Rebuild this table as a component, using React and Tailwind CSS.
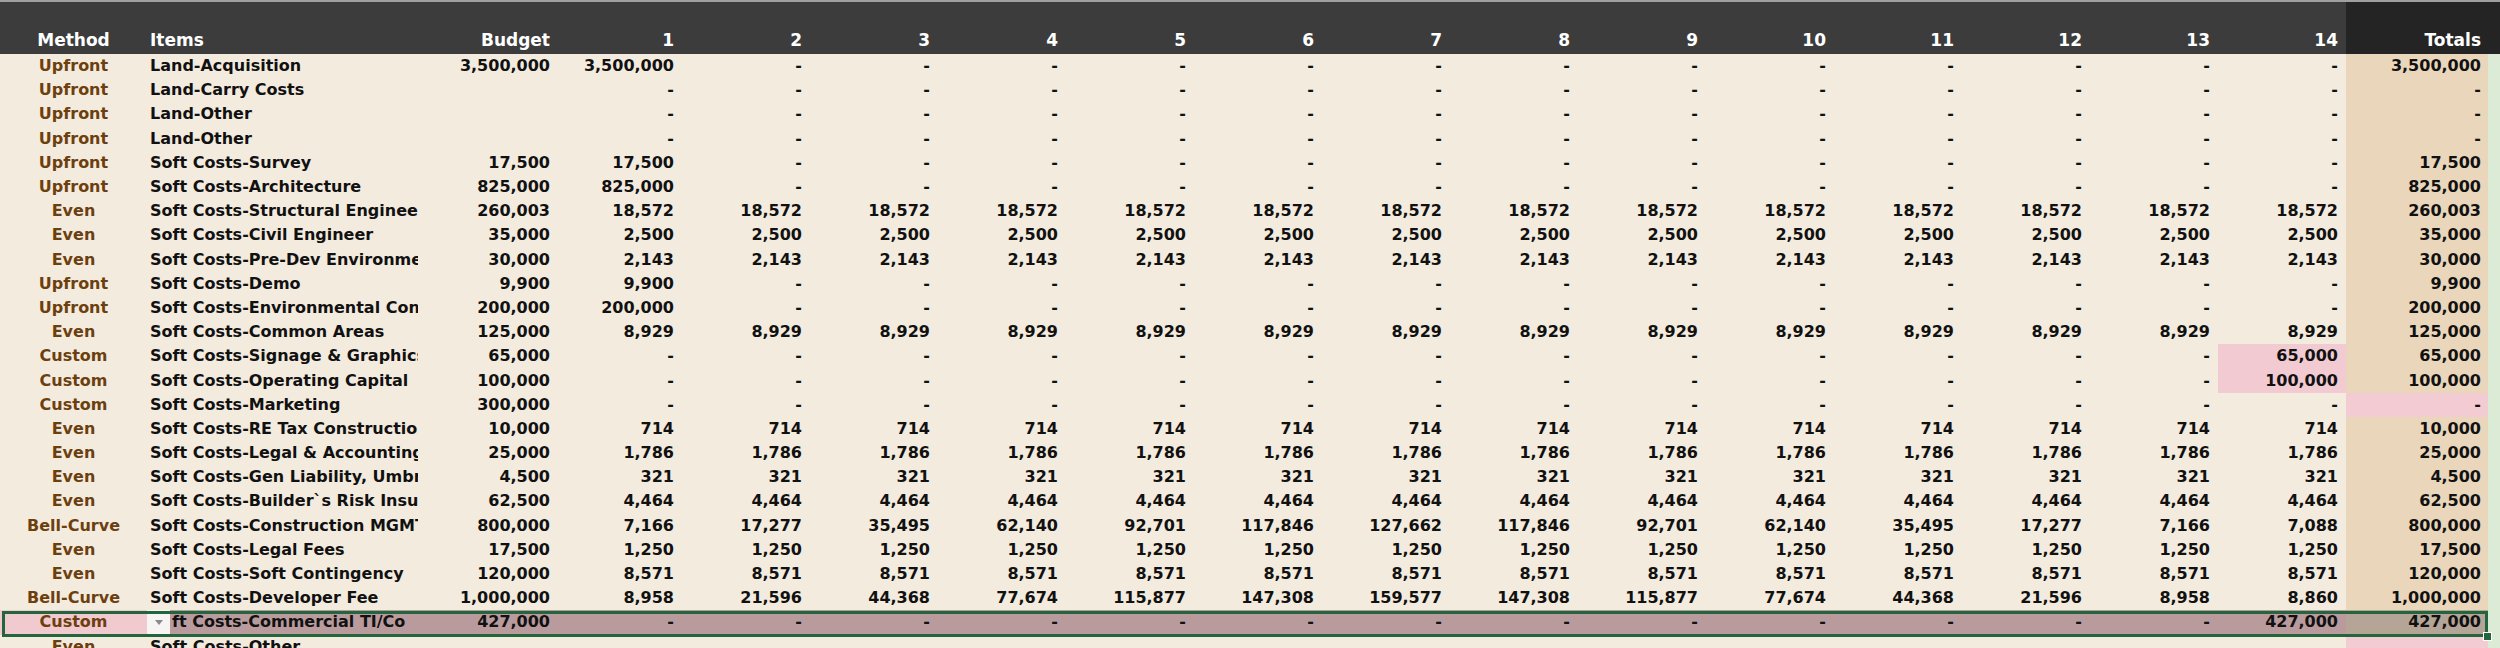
import React from 'react';

const even = (v) => Array(14).fill(v);
const dash = () => Array(14).fill('-');
const upfront = (v) => [v, ...Array(13).fill('-')];
const custom = (v) => [...Array(13).fill('-'), v];

const rows = [
  { method: 'Upfront', item: 'Land-Acquisition', budget: '3,500,000', months: upfront('3,500,000'), total: '3,500,000' },
  { method: 'Upfront', item: 'Land-Carry Costs', budget: '', months: dash(), total: '-' },
  { method: 'Upfront', item: 'Land-Other', budget: '', months: dash(), total: '-' },
  { method: 'Upfront', item: 'Land-Other', budget: '', months: dash(), total: '-' },
  { method: 'Upfront', item: 'Soft Costs-Survey', budget: '17,500', months: upfront('17,500'), total: '17,500' },
  { method: 'Upfront', item: 'Soft Costs-Architecture', budget: '825,000', months: upfront('825,000'), total: '825,000' },
  { method: 'Even', item: 'Soft Costs-Structural Engineer', budget: '260,003', months: even('18,572'), total: '260,003' },
  { method: 'Even', item: 'Soft Costs-Civil Engineer', budget: '35,000', months: even('2,500'), total: '35,000' },
  { method: 'Even', item: 'Soft Costs-Pre-Dev Environmental', budget: '30,000', months: even('2,143'), total: '30,000' },
  { method: 'Upfront', item: 'Soft Costs-Demo', budget: '9,900', months: upfront('9,900'), total: '9,900' },
  { method: 'Upfront', item: 'Soft Costs-Environmental Consultant', budget: '200,000', months: upfront('200,000'), total: '200,000' },
  { method: 'Even', item: 'Soft Costs-Common Areas', budget: '125,000', months: even('8,929'), total: '125,000' },
  { method: 'Custom', item: 'Soft Costs-Signage & Graphics', budget: '65,000', months: custom('65,000'), total: '65,000', pinkLast: true },
  { method: 'Custom', item: 'Soft Costs-Operating Capital', budget: '100,000', months: custom('100,000'), total: '100,000', pinkLast: true },
  { method: 'Custom', item: 'Soft Costs-Marketing', budget: '300,000', months: dash(), total: '-', pinkTotal: true },
  { method: 'Even', item: 'Soft Costs-RE Tax Construction', budget: '10,000', months: even('714'), total: '10,000' },
  { method: 'Even', item: 'Soft Costs-Legal & Accounting', budget: '25,000', months: even('1,786'), total: '25,000' },
  { method: 'Even', item: 'Soft Costs-Gen Liability, Umbrella', budget: '4,500', months: even('321'), total: '4,500' },
  { method: 'Even', item: 'Soft Costs-Builder`s Risk Insurance', budget: '62,500', months: even('4,464'), total: '62,500' },
  {
    method: 'Bell-Curve', item: 'Soft Costs-Construction MGMT', budget: '800,000',
    months: ['7,166', '17,277', '35,495', '62,140', '92,701', '117,846', '127,662', '117,846', '92,701', '62,140', '35,495', '17,277', '7,166', '7,088'],
    total: '800,000',
  },
  { method: 'Even', item: 'Soft Costs-Legal Fees', budget: '17,500', months: even('1,250'), total: '17,500' },
  { method: 'Even', item: 'Soft Costs-Soft Contingency', budget: '120,000', months: even('8,571'), total: '120,000' },
  {
    method: 'Bell-Curve', item: 'Soft Costs-Developer Fee', budget: '1,000,000',
    months: ['8,958', '21,596', '44,368', '77,674', '115,877', '147,308', '159,577', '147,308', '115,877', '77,674', '44,368', '21,596', '8,958', '8,860'],
    total: '1,000,000',
  },
];

const monthWidth = (i) => (i === 0 ? 'w-[124px]' : 'w-[128px]');

function Row({ r }) {
  return (
    <div className="flex h-[24.2px] items-center">
      <div className="w-[147px] shrink-0 text-center text-[#6c400e]">{r.method}</div>
      <div className="w-[271px] shrink-0 overflow-hidden whitespace-nowrap pl-[3px]">{r.item}</div>
      <div className="w-[140px] shrink-0 pr-2 text-right">{r.budget}</div>
      {r.months.map((m, i) => (
        <div
          key={i}
          className={`${monthWidth(i)} flex h-full shrink-0 items-center justify-end pr-2 ${
            r.pinkLast && i === 13 ? 'bg-[#f2cbd2]' : ''
          }`}
        >
          {m}
        </div>
      ))}
      <div
        className={`flex h-full w-[142px] shrink-0 items-center justify-end pr-[7px] ${
          r.pinkTotal ? 'bg-[#f3cbd2]' : 'bg-[#e9d6bb]'
        }`}
      >
        {r.total}
      </div>
      <div className="h-full flex-1 bg-[#dcebd6]" />
    </div>
  );
}

function SelectedRow() {
  const months = custom('427,000');
  return (
    <div className="relative flex h-[24.2px] items-center">
      <div className="flex h-full w-[147px] shrink-0 items-center justify-center bg-[#f1cad0] text-[#6c400e]">Custom</div>
      <div className="flex h-full w-[23px] shrink-0 items-center justify-center bg-[#f7f5f3]">
        <svg width="8" height="5" viewBox="0 0 8 5">
          <path d="M0 0 L8 0 L4 5 Z" fill="#8a8a8a" />
        </svg>
      </div>
      <div className="flex h-full w-[248px] shrink-0 items-center overflow-hidden whitespace-nowrap bg-[#b99b9e] pl-[2px]">
        ft Costs-Commercial TI/Co
      </div>
      <div className="flex h-full w-[140px] shrink-0 items-center justify-end bg-[#b99b9e] pr-2">427,000</div>
      {months.map((m, i) => (
        <div key={i} className={`${monthWidth(i)} flex h-full shrink-0 items-center justify-end bg-[#b99b9e] pr-2`}>
          {m}
        </div>
      ))}
      <div className="flex h-full w-[142px] shrink-0 items-center justify-end bg-[#b4a596] pr-[7px]">427,000</div>
      <div className="h-full flex-1 bg-[#dcebd6]" />
      <div className="pointer-events-none absolute left-[2px] top-[1px] h-[26px] w-[2486px] border-[3px] border-[#25653d]" />
      <div className="absolute left-[2483px] top-[22px] h-[9px] w-[9px] border border-white bg-[#25653d]" />
    </div>
  );
}

export default function App() {
  return (
    <div className="h-[648px] w-[2500px] overflow-hidden bg-[#f4ebdf] font-['DejaVu_Sans',sans-serif] text-[16px] font-bold text-[#111]">
      <div className="flex h-[54px] items-end border-t-2 border-[#a0a0a0] bg-[#3c3c3c] text-[17px] text-white">
        <div className="w-[147px] shrink-0 pb-[1px] text-center">Method</div>
        <div className="w-[271px] shrink-0 pb-[1px] pl-[3px]">Items</div>
        <div className="w-[140px] shrink-0 pb-[1px] pr-2 text-right">Budget</div>
        {Array.from({ length: 14 }, (_, i) => (
          <div key={i} className={`${monthWidth(i)} shrink-0 pb-[1px] pr-2 text-right`}>
            {i + 1}
          </div>
        ))}
        <div className="flex h-full flex-1 items-end bg-[#242424]">
          <div className="w-[142px] pb-[1px] pr-[7px] text-right">Totals</div>
        </div>
      </div>
      {rows.map((r, i) => (
        <Row key={i} r={r} />
      ))}
      <SelectedRow />
      <Row r={{ method: 'Even', item: 'Soft Costs-Other', budget: '', months: Array(14).fill(''), total: '', pinkTotal: true }} />
    </div>
  );
}
